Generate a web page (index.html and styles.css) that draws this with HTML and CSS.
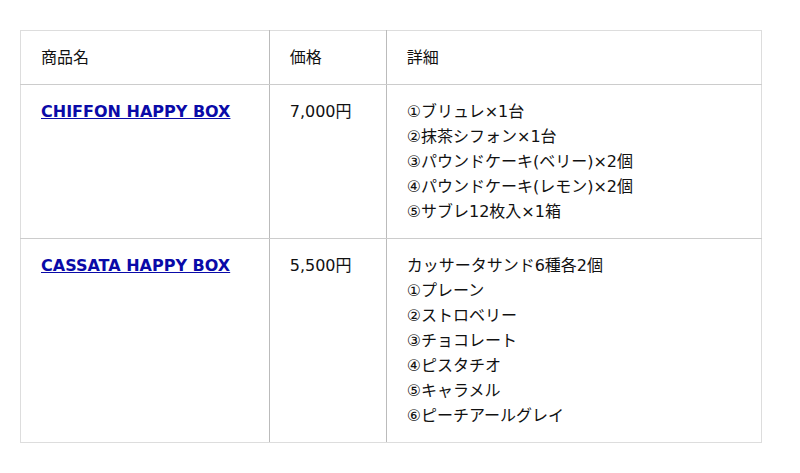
FILE: index.html
```html
<!DOCTYPE html>
<html lang="ja">
<head>
<meta charset="utf-8">
<link rel="stylesheet" href="styles.css">
</head>
<body>
<div class="wrap">
<table class="items">
  <colgroup>
    <col class="c1"><col class="c2"><col class="c3">
  </colgroup>
  <thead>
    <tr><th>商品名</th><th>価格</th><th>詳細</th></tr>
  </thead>
  <tbody>
    <tr>
      <td><a href="#" class="name">CHIFFON HAPPY BOX</a></td>
      <td>7,000円</td>
      <td>①ブリュレ×1台<br>②抹茶シフォン×1台<br>③パウンドケーキ(ベリー)×2個<br>④パウンドケーキ(レモン)×2個<br>⑤サブレ12枚入×1箱</td>
    </tr>
    <tr>
      <td><a href="#" class="name">CASSATA HAPPY BOX</a></td>
      <td>5,500円</td>
      <td>カッサータサンド6種各2個<br>①プレーン<br>②ストロベリー<br>③チョコレート<br>④ピスタチオ<br>⑤キャラメル<br>⑥ピーチアールグレイ</td>
    </tr>
  </tbody>
</table>
</div>
</body>
</html>
```

FILE: styles.css
```css
html, body {
  margin: 0;
  padding: 0;
  background: #ffffff;
}
.wrap {
  padding: 30px 20px;
}
.items {
  border-collapse: collapse;
  width: 742px;
  font-family: "DejaVu Sans", "Noto Sans CJK JP", sans-serif;
  font-size: 16px;
  line-height: 25px;
  color: #111111;
  border: 1px solid #dddddd;
}
.c1 { width: 249px; }
.c2 { width: 117px; }
.c3 { width: 376px; }
.items th, .items td {
  text-align: left;
  vertical-align: top;
  font-weight: normal;
  padding: 14px 20px;
  border-top: 1px solid #cccccc;
  border-bottom: 1px solid #cccccc;
  border-left: 1px solid #bbbbbb;
  border-right: 1px solid #bbbbbb;
}
.items tr > :first-child { border-left-color: #dddddd; }
.items tr > :last-child { border-right-color: #dddddd; }
.items thead th { border-top-color: #dddddd; }
.items tbody tr:last-child td { border-bottom-color: #dddddd; }
.name {
  color: #0a0aa8;
  font-weight: bold;
  text-decoration: underline;
}
```
